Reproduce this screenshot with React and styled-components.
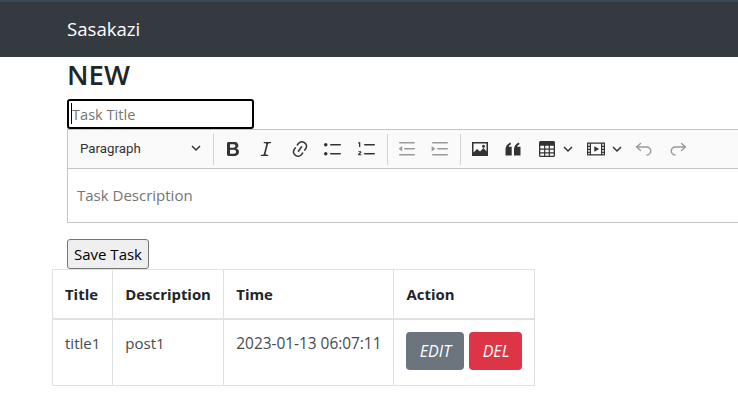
import React from "react";
import styled, { createGlobalStyle } from "styled-components";

const Global = createGlobalStyle`
  html, body { margin: 0; padding: 0; background: #fff; overflow: hidden; }
  body { font-family: "Open Sans", "Noto Sans", sans-serif; font-size: 15px; color: #212529; }
`;
const Page = styled.div`width: 738px; height: 417px; overflow: hidden;`;
const Navbar = styled.header`
  height: 55px; border-top: 2px solid #3a465a; background: #343a40;
  padding-left: 67px; display: flex; align-items: center; box-sizing: content-box;
`;
const Brand = styled.span`color: #fff; font-size: 18.6px; line-height: 1;`;
const Main = styled.main`padding-left: 52px;`;
const Form = styled.form`padding-left: 15px; display: flex; flex-direction: column; align-items: flex-start;`;
const Heading = styled.h1`margin: 0; font-size: 27.5px; line-height: 35px; height: 42px; font-weight: 600; color: #212529;`;
const TitleWrap = styled.div`position: relative; height: 30px;`;
const TitleInput = styled.input`
  box-sizing: border-box; width: 187px; height: 30px; padding: 0 3px; margin: 0;
  border: 2px solid #000; border-radius: 3px; outline: none; font: inherit; font-size: 14.6px; color: #212529;
  &::placeholder { color: #757575; opacity: 1; }
`;
const Caret = styled.span`position: absolute; left: 4px; top: 4px; width: 1px; height: 21px; background: #000;`;
const Editor = styled.div`width: 800px; border: 1px solid #c4c4c4; box-sizing: border-box;`;
const Toolbar = styled.div`
  height: 38px; background: #fafafa; border-bottom: 1px solid #c4c4c4; display: flex; align-items: center; padding-left: 6px;
`;
const Dropdown = styled.div`
  width: 133px; display: flex; align-items: center; justify-content: space-between; box-sizing: border-box;
  padding: 0 6px 2px 6px; font-family: "Roboto", sans-serif; font-size: 13.3px; color: #333; margin-right: 4px;
`;
const Sep = styled.span`width: 1px; height: 31px; background: #d2d2d2; flex: none; margin: 0 2px 0 ${p => p.$l}px;`;
const Tool = styled.span`
  width: 33.5px; flex: none; display: flex; align-items: center; justify-content: center;
  color: ${p => (p.$off ? "#9a9a9a" : "#333")};
`;
const SplitTool = styled.span`
  width: ${p => p.$w}px; flex: none; box-sizing: border-box; padding-left: ${p => p.$pad}px; display: flex; align-items: center; gap: 6px; color: #333;
`;
const Content = styled.div`height: 53px; box-sizing: border-box; padding: 0 0 2px 9px; display: flex; align-items: center; font-size: 15px; color: #757575;`;
const Save = styled.button`
  margin-top: 16px; height: 30px; width: 82px; padding: 0; box-sizing: border-box; background: #efefef;
  border: 1px solid #767676; border-radius: 3px; font: inherit; font-size: 15px; color: #000;
`;
const Table = styled.table`border-collapse: collapse; color: #212529;`;
const Th = styled.th`
  border: 1px solid #dee2e6; border-bottom: 2px solid #dee2e6; padding: 12px; text-align: left; font-weight: 700; font-size: 14.9px;
  line-height: 24px; width: ${p => p.$w}px; box-sizing: border-box; height: 49px;
`;
const Td = styled.td`
  border: 1px solid #dee2e6; padding: 12px; vertical-align: top; font-size: 15px; line-height: 22px; color: #444a50;
  height: 66px; box-sizing: border-box; white-space: nowrap;
`;
const TimeCell = styled(Td)`font-size: 15.4px; line-height: 24px;`;
const Actions = styled.div`display: flex; gap: 5px;`;
const ActionBtn = styled.button`
  height: 38px; width: ${p => p.$w}px; border: 0; padding: 0; border-radius: 4px; background: ${p => p.$bg}; color: #fff;
  font: italic 400 16px "Open Sans", sans-serif;
`;

const I = ({ children }) => <svg width="20" height="20" viewBox="0 0 20 20" fill="currentColor">{children}</svg>;
const Chevron = () => (
  <svg width="10" height="10" viewBox="0 0 10 10" fill="none" stroke="#333" strokeWidth="1.5"><path d="M1 3l4 4 4-4" /></svg>
);
const Bold = () => <I><path d="M10.187 17H5.773c-.637 0-1.092-.138-1.364-.415-.273-.277-.409-.718-.409-1.323V4.738c0-.617.14-1.062.419-1.332.279-.27.73-.406 1.354-.406h4.68c.69 0 1.288.041 1.793.124.506.083.96.242 1.36.478.341.197.644.447.906.75a3.262 3.262 0 0 1 .808 2.162c0 1.401-.722 2.426-2.167 3.075C15.05 10.175 16 11.315 16 13.01a3.756 3.756 0 0 1-2.296 3.504 6.1 6.1 0 0 1-1.517.377c-.571.073-1.238.11-2 .11zm-.217-6.217H7v4.087h3.069c1.977 0 2.965-.69 2.965-2.072 0-.707-.256-1.22-.768-1.537-.512-.319-1.277-.478-2.296-.478zM7 5.13v3.619h2.606c.729 0 1.292-.067 1.69-.2a1.6 1.6 0 0 0 .91-.765c.165-.267.247-.566.247-.897 0-.707-.26-1.176-.778-1.409-.519-.232-1.31-.348-2.375-.348H7z" /></I>;
const Italic = () => <I><path d="m9.586 14.633.021.004c-.036.335.095.655.393.962.082.083.173.15.274.201h1.474a.6.6 0 1 1 0 1.2H5.304a.6.6 0 0 1 0-1.2h1.15c.474-.07.809-.182 1.005-.334.157-.122.291-.32.404-.597l2.416-9.55a1.053 1.053 0 0 0-.281-.823 1.12 1.12 0 0 0-.442-.296H8.15a.6.6 0 0 1 0-1.2h6.443a.6.6 0 1 1 0 1.2h-1.195c-.376.056-.65.155-.823.296-.215.175-.423.439-.623.79l-2.366 9.347z" /></I>;
const LinkIcon = () => <I><path d="m11.077 15 .991-1.416a.75.75 0 1 1 1.229.86l-1.148 1.64a.748.748 0 0 1-.217.206 5.251 5.251 0 0 1-8.503-5.955.741.741 0 0 1 .12-.274l1.147-1.639a.75.75 0 1 1 1.228.86L4.933 10.7l.006.003a3.75 3.75 0 0 0 6.132 4.294l.006.004zm5.494-5.335a.748.748 0 0 1-.12.274l-1.147 1.639a.75.75 0 1 1-1.228-.86l.86-1.23a3.75 3.75 0 0 0-6.144-4.301l-.86 1.229a.75.75 0 0 1-1.229-.86l1.148-1.64a.748.748 0 0 1 .217-.206 5.251 5.251 0 0 1 8.503 5.955zm-4.563-2.532a.75.75 0 0 1 .184 1.045l-3.155 4.505a.75.75 0 1 1-1.229-.86l3.155-4.506a.75.75 0 0 1 1.045-.184z" /></I>;
const Bullets = () => <I><path d="M7 5.75c0 .414.336.75.75.75h9.5a.75.75 0 1 0 0-1.5h-9.5a.75.75 0 0 0-.75.75zm-6 0C1 4.784 1.777 4 2.75 4c.966 0 1.75.777 1.75 1.75 0 .966-.777 1.75-1.75 1.75C1.784 7.5 1 6.723 1 5.75zm6 9c0 .414.336.75.75.75h9.5a.75.75 0 1 0 0-1.5h-9.5a.75.75 0 0 0-.75.75zm-6 0c0-.966.777-1.75 1.75-1.75.966 0 1.75.777 1.75 1.75 0 .966-.777 1.75-1.75 1.75-.966 0-1.75-.777-1.75-1.75z" /></I>;
const Numbered = () => (
  <I>
    <path d="M7 5.75c0 .414.336.75.75.75h9.5a.75.75 0 1 0 0-1.5h-9.5a.75.75 0 0 0-.75.75zm0 9c0 .414.336.75.75.75h9.5a.75.75 0 1 0 0-1.5h-9.5a.75.75 0 0 0-.75.75z" />
    <path d="M2 3.2h1.3V8H2V4.4H1V3.6zM1 12.6c.3-1 3.3-1 3.3.6 0 .9-1 1.4-1.6 2.1h1.7v1H1v-.9c.7-.9 2-1.6 2-2.3 0-.6-.8-.5-1-.1z" />
  </I>
);
const lines = "M2 3.750c0 .414.336.75.75.75h14.5a.75.75 0 1 0 0-1.5H2.750a.75.75 0 0 0-.75.75zm5 6c0 .414.336.75.75.75h9.5a.75.75 0 1 0 0-1.5h-9.5a.75.75 0 0 0-.75.75zM2.750 16.500h14.5a.75.75 0 1 0 0-1.5H2.750a.75.75 0 1 0 0 1.5z";
const Outdent = () => <I><path d={lines} /><path d="M5.2 7v5.600L1.600 9.800z" /></I>;
const Indent = () => <I><path d={lines} /><path d="M1.600 7v5.600l3.600-2.800z" /></I>;
const ImageIcon = () => (
  <I><path fillRule="evenodd" d="M2 3h16v14H2zM3.500 4.500v9l3.500-3.500 3 2.500 3.500-3.500 3 3.500V4.500zM13.500 5.800a1.500 1.500 0 1 1 0 3 1.500 1.500 0 0 1 0-3z" /></I>
);
const Quote = () => (
  <I><path d="M2.500 10.200c0-3 1.800-5.300 4.800-6.700l.8 1.400c-1.400.9-2.200 1.800-2.400 2.900h3V16.500H2.500zM11 10.200c0-3 1.800-5.300 4.800-6.700l.8 1.400c-1.400.9-2.200 1.800-2.400 2.900h3.300V16.500H11z" /></I>
);
const TableIcon = () => (
  <I><path fillRule="evenodd" d="M3.500 2h13A1.500 1.500 0 0 1 18 3.500v13a1.500 1.500 0 0 1-1.500 1.500h-13A1.500 1.500 0 0 1 2 16.500v-13A1.500 1.500 0 0 1 3.500 2zM3.300 6.800v2.700h3.800V6.800zm5 0v2.700h3.400V6.800zm4.600 0v2.700h3.800V6.800zM3.300 10.700v2.500h3.800v-2.500zm5 0v2.500h3.400v-2.500zm4.600 0v2.500h3.800v-2.500zM3.300 14.400v2.300h3.800v-2.300zm5 0v2.300h3.400v-2.300zm4.600 0v2.300h3.800v-2.300z" /></I>
);
const Media = () => (
  <I><path fillRule="evenodd" d="M1 3.500h18v13H1zM2.200 4.700v2h1.600v-2zm0 3.300v1.700h1.600V8zm0 3v1.700h1.600V11zm0 3v1.300h1.600V14zM16.200 4.700v2h1.600v-2zm0 3.300v1.700h1.600V8zm0 3v1.700h1.600V11zm0 3v1.300h1.600V14zM5 4.700v10.600h10V4.700zM8.300 7.300 13.200 10l-4.900 2.700z" /></I>
);
const Undo = () => <I><path fill="none" stroke="currentColor" strokeWidth="1.400" strokeLinecap="round" strokeLinejoin="round" d="M6.500 4.500 2.500 8l4 3.500M3 8h9.500a4 4 0 0 1 .5 8" /></I>;
const Redo = () => <I><path fill="none" stroke="currentColor" strokeWidth="1.400" strokeLinecap="round" strokeLinejoin="round" d="M13.500 4.500 17.500 8l-4 3.500M17 8H7.500a4 4 0 0 0-.5 8" /></I>;

export default function App() {
  return (
    <Page>
      <Global />
      <Navbar><Brand>Sasakazi</Brand></Navbar>
      <Main>
        <Form onSubmit={e => e.preventDefault()}>
          <Heading>NEW</Heading>
          <TitleWrap>
            <TitleInput placeholder="Task Title" readOnly />
            <Caret />
          </TitleWrap>
          <Editor>
            <Toolbar>
              <Dropdown>Paragraph <Chevron /></Dropdown>
              <Sep $l={2} />
              <Tool><Bold /></Tool>
              <Tool><Italic /></Tool>
              <Tool><LinkIcon /></Tool>
              <Tool><Bullets /></Tool>
              <Tool><Numbered /></Tool>
              <Sep $l={3.5} />
              <Tool $off><Outdent /></Tool>
              <Tool $off><Indent /></Tool>
              <Sep $l={3} />
              <Tool><ImageIcon /></Tool>
              <Tool><Quote /></Tool>
              <SplitTool $w={49.5} $pad={7}><TableIcon /><Chevron /></SplitTool>
              <SplitTool $w={48} $pad={6}><Media /><Chevron /></SplitTool>
              <Tool $off><Undo /></Tool>
              <Tool $off><Redo /></Tool>
            </Toolbar>
            <Content>Task Description</Content>
          </Editor>
          <Save type="button">Save Task</Save>
        </Form>
        <Table>
          <thead>
            <tr>
              <Th $w={60}>Title</Th>
              <Th $w={111}>Description</Th>
              <Th $w={170}>Time</Th>
              <Th $w={141}>Action</Th>
            </tr>
          </thead>
          <tbody>
            <tr>
              <Td>title1</Td>
              <Td>post1</Td>
              <TimeCell>2023-01-13 06:07:11</TimeCell>
              <Td>
                <Actions>
                  <ActionBtn $w={58} $bg="#6c757d">EDIT</ActionBtn>
                  <ActionBtn $w={53} $bg="#dc3545">DEL</ActionBtn>
                </Actions>
              </Td>
            </tr>
          </tbody>
        </Table>
      </Main>
    </Page>
  );
}
